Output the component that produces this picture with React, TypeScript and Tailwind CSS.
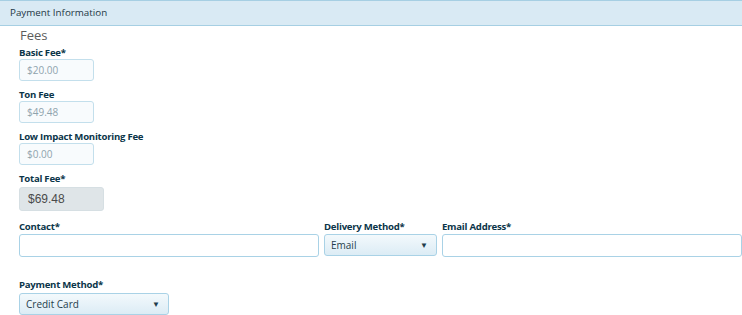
import React from "react";

const font = { fontFamily: '"Open Sans", "Noto Sans", Arial, sans-serif' };

function Label({ children }: { children: React.ReactNode }) {
  return (
    <div className="h-[13px] pt-[1px] text-[9.6px] leading-[13px] font-bold tracking-[-0.25px] text-[#0b3549]">
      {children}
    </div>
  );
}

function FeeInput({ value }: { value: string }) {
  return (
    <div className="mt-[1px] flex h-[22px] w-[75px] items-center rounded-[3px] border border-[#c3dfec] bg-[#f8fbfd] pl-[7px] text-[10px] text-[#8fa3ad]">
      {value}
    </div>
  );
}

function Select({ value, width }: { value: string; width: string }) {
  return (
    <div
      className={`${width} mt-[1px] flex h-[22px] items-center justify-between rounded-[3px] border border-[#a9d2e6] bg-gradient-to-b from-[#f3f9fc] to-[#dcecf5] pr-[8px] pl-[6px] text-[10px] text-[#1f3d4c]`}
    >
      <span>{value}</span>
      <span className="text-[8px] leading-none text-[#1f3d4c]">▼</span>
    </div>
  );
}

export default function App() {
  return (
    <div className="h-[315px] w-[742px] overflow-hidden bg-white" style={font}>
      <div className="flex h-[26px] items-center border-y border-[#a6cfe3] bg-[#d9eaf4] pl-[10px] text-[9.8px] text-[#1d3644]">
        Payment Information
      </div>
      <div className="pl-[19px]">
        <div className="h-[18px] pl-[1px] text-[13px] leading-[18px] text-[#5c5c5c]">Fees</div>
        <div className="mt-[1px]">
          <Label>Basic Fee*</Label>
          <FeeInput value="$20.00" />
        </div>
        <div className="mt-[6px]">
          <Label>Ton Fee</Label>
          <FeeInput value="$49.48" />
        </div>
        <div className="mt-[6px]">
          <Label>Low Impact Monitoring Fee</Label>
          <FeeInput value="$0.00" />
        </div>
        <div className="mt-[6px]">
          <Label>Total Fee*</Label>
          <div
            className="mt-[3px] flex h-[24px] w-[85px] items-center rounded-[3px] border border-[#d6dfe3] bg-[#dfe5e8] pl-[8px] text-[12px] text-[#4a4a4a]"
            style={{ fontFamily: '"Liberation Sans", Arial, sans-serif' }}
          >
            $69.48
          </div>
        </div>
        <div className="mt-[8px] flex gap-[5px]">
          <div className="w-[300px]">
            <Label>Contact*</Label>
            <div className="mt-[2px] h-[23px] w-full rounded-[3px] border border-[#a9d2e6] bg-white" />
          </div>
          <div className="w-[113px]">
            <Label>Delivery Method*</Label>
            <div className="mt-[2px]">
              <Select value="Email" width="w-[113px]" />
            </div>
          </div>
          <div className="flex-1">
            <Label>Email Address*</Label>
            <div className="mt-[2px] h-[23px] w-[300px] rounded-[3px] border border-[#a9d2e6] bg-white" />
          </div>
        </div>
        <div className="mt-[20px]">
          <Label>Payment Method*</Label>
          <div className="mt-[3px]">
            <Select value="Credit Card" width="w-[150px]" />
          </div>
        </div>
      </div>
    </div>
  );
}
